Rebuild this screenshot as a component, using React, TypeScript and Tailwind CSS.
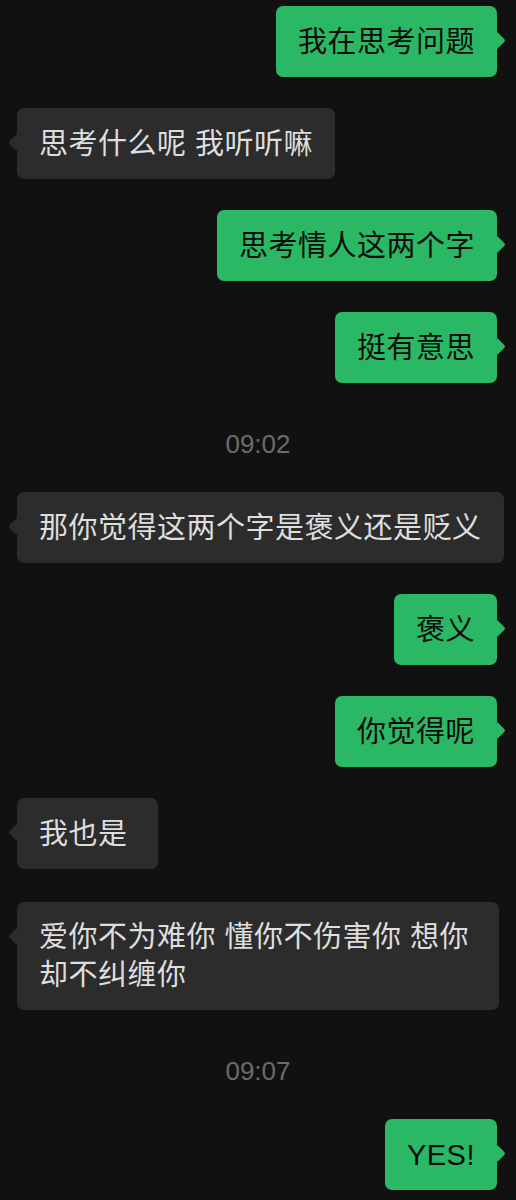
import React from "react"

type Msg =
  | { kind: "me"; text: string }
  | { kind: "them"; text: string; wide?: boolean }
  | { kind: "time"; text: string }

const messages: Msg[] = [
  { kind: "me", text: "我在思考问题" },
  { kind: "them", text: "思考什么呢 我听听嘛" },
  { kind: "me", text: "思考情人这两个字" },
  { kind: "me", text: "挺有意思" },
  { kind: "time", text: "09:02" },
  { kind: "them", text: "那你觉得这两个字是褒义还是贬义" },
  { kind: "me", text: "褒义" },
  { kind: "me", text: "你觉得呢" },
  { kind: "them", text: "我也是\u00a0" },
  { kind: "them", text: "爱你不为难你 懂你不伤害你 想你却不纠缠你", wide: true },
  { kind: "time", text: "09:07" },
  { kind: "me", text: "YES!" },
]

const font = "font-['Liberation_Sans','Noto_Sans_CJK_SC',sans-serif]"

function Bubble({ msg }: { msg: Msg }) {
  if (msg.kind === "time") {
    return (
      <div className={`mt-[15px] mb-[2px] h-[30px] text-center text-[26px] leading-[30px] text-[#6b6b6b] ${font}`}>
        {msg.text}
      </div>
    )
  }

  if (msg.kind === "me") {
    return (
      <div className="flex justify-end pr-[19px]">
        <div className="relative flex h-[71px] max-w-[490px] items-center rounded-[7px] bg-[#2bb864] px-[22px] text-[29px] leading-[38px] tracking-[0.5px] text-[#0c0c0c]">
          {/* tail */}
          <span className="absolute top-[28px] right-[-6px] h-[13px] w-[13px] rotate-45 rounded-[2px] bg-[#2bb864]"></span>
          <span className={`relative ${font}`}>{msg.text}</span>
        </div>
      </div>
    )
  }

  return (
    <div className={`flex justify-start pl-[17px] ${msg.wide ? "mt-[2px]" : ""}`}>
      <div
        className={`relative flex items-center rounded-[7px] bg-[#2c2c2c] px-[22px] text-[29px] leading-[38px] tracking-[0.5px] text-[#dedede] ${
          msg.wide ? "h-[108px] w-[482px]" : "h-[71px] max-w-[490px]"
        }`}
      >
        <span className="absolute top-[28px] left-[-6px] h-[13px] w-[13px] rotate-45 rounded-[2px] bg-[#2c2c2c]"></span>
        <span className={`relative ${font}`}>{msg.text}</span>
      </div>
    </div>
  )
}

export default function App() {
  return (
    <div className="min-h-[1200px] w-[516px] overflow-hidden bg-[#111111]">
      <div className="flex flex-col gap-[31px] pt-[6px]">
        {messages.map((m, i) => (
          <Bubble key={i} msg={m} />
        ))}
      </div>
    </div>
  )
}
